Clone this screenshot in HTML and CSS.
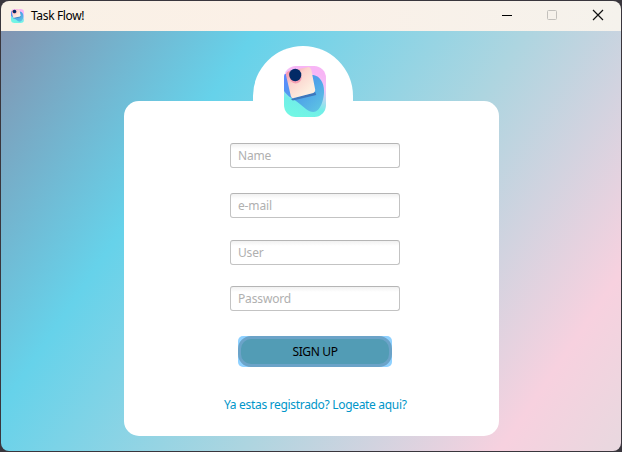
FILE: index.html
```html
<!DOCTYPE html>
<html lang="es">
<head>
<meta charset="utf-8">
<title>Task Flow!</title>
<link rel="stylesheet" href="styles.css">
</head>
<body>
<svg class="defs" width="0" height="0" aria-hidden="true">
  <defs>
    <linearGradient id="base" x1="0.7" y1="0" x2="0.4" y2="1">
      <stop offset="0.1" stop-color="#f7b5f5"/><stop offset="0.35" stop-color="#f3c4f8"/><stop offset="0.75" stop-color="#71eee8"/><stop offset="1" stop-color="#72f6e4"/>
    </linearGradient>
    <linearGradient id="wave" x1="0" y1="0" x2="1" y2="1">
      <stop offset="0" stop-color="#5b86ff"/><stop offset="0.5" stop-color="#4ea3e8"/><stop offset="1" stop-color="#61c9e3"/>
    </linearGradient>
    <linearGradient id="note" x1="0.1" y1="0.1" x2="0.7" y2="0.8">
      <stop offset="0" stop-color="#f694ac"/><stop offset="0.4" stop-color="#fbd3cd"/><stop offset="1" stop-color="#fdeee0"/>
    </linearGradient>
    <clipPath id="edge"><rect width="43" height="51" rx="12"/></clipPath>
    <symbol id="logo" viewBox="0 0 43 51" preserveAspectRatio="none">
      <g clip-path="url(#edge)">
        <rect width="43" height="51" fill="url(#base)"/>
        <path d="M0 8L30 9C37 10 41 17 41 25C41 34 37 46 30 46C25 46 20 41 15 37C10 33 4 31 0 25Z" fill="url(#wave)"/>
        <path d="M7 33L32 26L33 29L9 34.5Z" fill="#3e78bd"/>
        <path d="M2 9Q2 6 5 5L25 1Q27 1 28 4L32 24Q32 26 30 27L10 32Q8 33 7 30Z" fill="url(#note)"/>
        <circle cx="12" cy="11.5" r="6" fill="#f18eaa" opacity=".75"/>
        <circle cx="11.5" cy="9" r="6.2" fill="#032a66"/>
      </g>
    </symbol>
  </defs>
</svg>
<div class="window">
  <header class="titlebar">
    <svg class="app-icon"><use href="#logo"/></svg>
    <span class="title">Task Flow!</span>
    <svg class="controls" width="103" height="12" viewBox="0 0 103 12">
      <path d="M0 6.5H10" stroke="#000"/>
      <rect x="45.5" y="1.5" width="9" height="9" rx="1" fill="none" stroke="#c3c0bc"/>
      <path d="M91 1L101 11M101 1L91 11" stroke="#111" stroke-width="1.2"/>
    </svg>
  </header>
  <main class="scene">
    <div class="badge"><svg class="logo"><use href="#logo"/></svg></div>
    <form class="card">
      <div class="field name">Name</div>
      <div class="field email">e-mail</div>
      <div class="field user">User</div>
      <div class="field password">Password</div>
      <div class="signup"><span>SIGN UP</span></div>
      <a class="login">Ya estas registrado? Logeate aqui?</a>
    </form>
  </main>
</div>
</body>
</html>
```
FILE: styles.css
```css
* { box-sizing: border-box; }
body {
  margin: 0;
  padding: 1px;
  height: 452px;
  overflow: hidden;
  background: #39363d;
  font: 12px/16px "Noto Sans", "Open Sans", sans-serif;
}
.defs { position: absolute; }
.window { height: 450px; border-radius: 8px; overflow: hidden; }
.titlebar {
  height: 30px;
  display: flex;
  align-items: center;
  padding: 0 16px 0 10px;
  background: linear-gradient(90deg, #f9f1e6, #fbf0e7 45%, #f5f2ec);
}
.app-icon { width: 13px; height: 14px; margin-right: 7px; }
.title { color: #000; letter-spacing: -0.35px; }
.controls { margin: 0 0 2px auto; }
.scene {
  height: 420px;
  padding: 15px 122px 15px 123px;
  background: linear-gradient(124.1deg, #8294b1 0%, #66d2ea 28.2%, #add5e0 58%, #f7d1df 86.6%, #e8d8df 100%);
}
.badge {
  width: 100px;
  height: 80px;
  margin: 0 0 -25px 129px;
  padding: 20px 0 0 31px;
  border-radius: 50px 50px 0 0;
  background: #fff;
  position: relative;
  z-index: 1;
}
.logo { display: block; width: 42px; height: 51px; }
.card {
  height: 335px;
  padding: 42px 0 0;
  border-radius: 15px;
  background: #fff;
  display: flex;
  flex-direction: column;
}
.field {
  width: 170px;
  height: 25px;
  margin-left: 106px;
  padding: 4px 7px;
  border: 1px solid #c3c3c3;
  border-top-color: #b5b5b5;
  border-radius: 3px;
  background: linear-gradient(#f1f1f1, #fff 5px);
  color: #b0b0b0;
  letter-spacing: -0.15px;
}
.email { margin-top: 25px; }
.user { margin-top: 22px; }
.password { margin-top: 21px; }
.signup {
  width: 154px;
  height: 31px;
  margin: 25px 0 0 114px;
  border-radius: 5px;
  background: #8fd1ff;
  display: flex;
}
.signup span {
  flex: 1;
  border: 3px solid #6ba3c8;
  border-radius: 13px;
  background: #529cb5;
  color: #000;
  line-height: 25px;
  text-align: center;
  letter-spacing: -0.35px;
}
.login { margin: 30px 0 0 100px; color: #0096c9; white-space: nowrap; letter-spacing: -0.32px; }
```
